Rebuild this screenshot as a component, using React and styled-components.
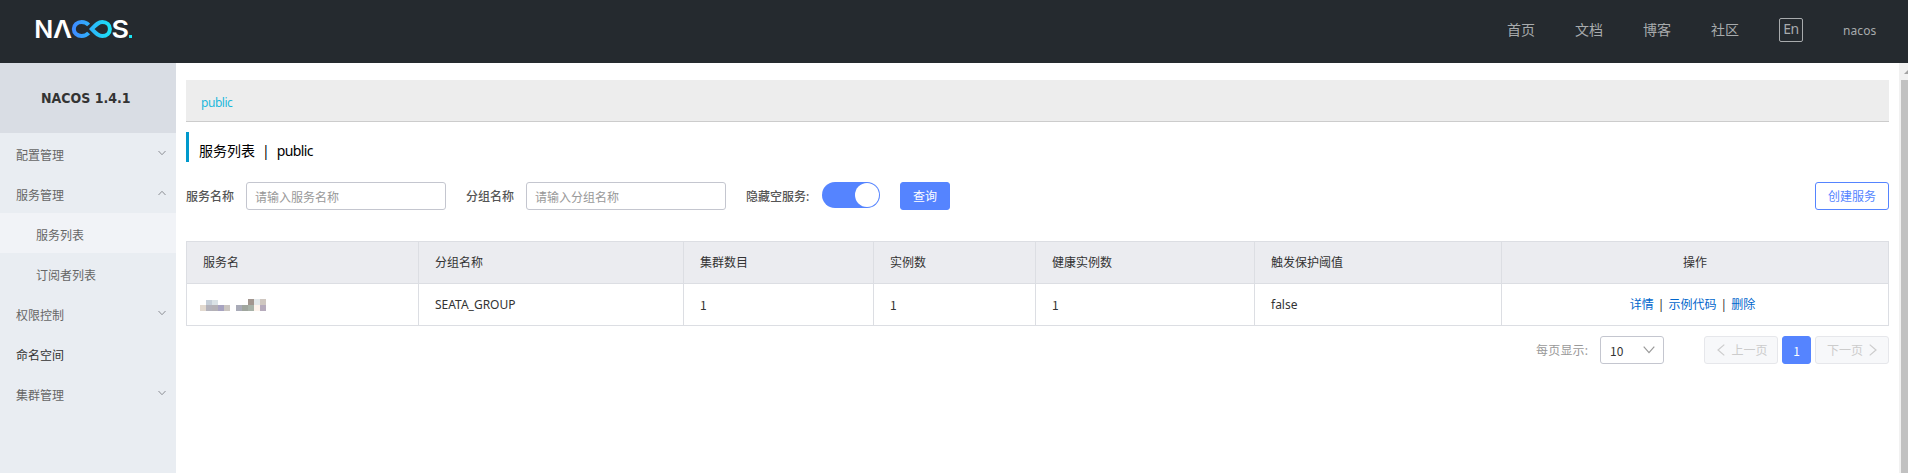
import React from "react";
import styled, { createGlobalStyle } from "styled-components";

const GlobalStyle = createGlobalStyle`
  * { box-sizing: border-box; }
  body {
    margin: 0;
    overflow: hidden;
    background: #fff;
    color: #333;
    font: 12px/18px "Noto Sans", "Noto Sans CJK SC", sans-serif;
  }
`;

const Page = styled.div`
  display: flex;
  flex-direction: column;
  height: 473px;
`;

const Header = styled.header`
  flex: none;
  display: flex;
  align-items: center;
  justify-content: space-between;
  height: 63px;
  padding: 0 32px 0 36px;
  background: #252a2f;
`;

const Logo = styled.svg`
  display: block;
  width: 98px;
  height: 20px;
  margin-bottom: 5px;
  overflow: visible;
`;

const Nav = styled.nav`
  display: flex;
  align-items: center;
  gap: 40px;
  height: 24px;
  margin-bottom: 3px;
  color: #a8abad;
  font-size: 14px;
  line-height: 24px;
`;

const NavLink = styled.a`
  width: 28px;
  white-space: nowrap;
`;

const LangSwitch = styled.button`
  display: flex;
  justify-content: center;
  width: 24px;
  height: 24px;
  padding: 0;
  border: 1px solid #a8abad;
  border-radius: 2px;
  background: none;
  color: inherit;
  font: 14px/20px "Noto Sans", sans-serif;
  letter-spacing: -0.4px;
`;

const UserName = styled.span`
  width: 33px;
  font-size: 12px;
  letter-spacing: 0.1px;
  padding-top: 2px;
`;

const Body = styled.div`
  flex: 1;
  display: flex;
  min-height: 0;
`;

const Sidebar = styled.aside`
  flex: none;
  width: 176px;
  background: #e9edf2;
`;

const Product = styled.div`
  height: 70px;
  padding-left: 41px;
  background: #d9dde4;
  color: #333;
  font: bold 14px/71px "DejaVu Sans Condensed", "DejaVu Sans", sans-serif;
  white-space: nowrap;
`;

const MenuItem = styled.div`
  display: flex;
  align-items: center;
  justify-content: space-between;
  height: 40px;
  padding: 5px 10px 0 ${(p) => (p.$nested ? 36 : 16)}px;
  background: ${(p) => (p.$active ? "#f1f3f7" : "transparent")};
  color: ${(p) => (p.$strong ? "#333" : "#666")};
`;

const MenuArrow = styled.svg`
  width: 8px;
  height: 6px;
  margin-bottom: 5px;
  transform: ${(p) => (p.$up ? "rotate(180deg)" : "none")};
`;

const Main = styled.main`
  flex: 1;
  min-width: 0;
  padding: 17px 10px 0;
`;

const NamespaceBar = styled.div`
  height: 42px;
  padding: 3px 15px 0;
  border-bottom: 1px solid #ccc;
  background: #ededed;
  color: #1cb8dc;
  font-size: 12px;
  line-height: 40px;
  letter-spacing: -0.45px;
`;

const Title = styled.h1`
  display: flex;
  gap: 7px;
  height: 30px;
  margin: 10px 0 20px;
  padding: 4px 0 0 10px;
  border-left: 3px solid #09c;
  color: #000;
  font-size: 14px;
  font-weight: 400;
  line-height: 30px;
`;

const TitlePart = styled.span`
  display: block;
  letter-spacing: ${(p) => (p.$tight ? "-0.6px" : "normal")};
`;

const Form = styled.form`
  display: flex;
  align-items: flex-start;
  height: 28px;
  margin-bottom: 31px;
`;

const Label = styled.label`
  width: ${(p) => p.$width}px;
  color: #555;
  line-height: 30px;
  font-weight: 500;
  white-space: nowrap;
`;

const Input = styled.input`
  width: 200px;
  height: 28px;
  margin-right: 20px;
  padding: 2px 8px 0;
  border: 1px solid #c4c6cf;
  border-radius: 3px;
  outline: none;
  font: inherit;
  &::placeholder { color: #999; opacity: 1; }
`;

const Toggle = styled.button`
  display: flex;
  justify-content: flex-end;
  width: 58px;
  height: 26px;
  margin-right: 20px;
  padding: 1px;
  border: 0;
  border-radius: 13px;
  background: #5584ff;
`;

const Knob = styled.span`
  width: 24px;
  height: 24px;
  border-radius: 50%;
  background: #fff;
`;

const Button = styled.button`
  width: ${(p) => p.$width}px;
  height: 28px;
  margin-left: ${(p) => (p.$end ? "auto" : 0)};
  padding: 2px 0 0;
  border: 1px solid #5584ff;
  border-radius: 3px;
  background: ${(p) => (p.$outline ? "#fff" : "#5584ff")};
  color: ${(p) => (p.$outline ? "#5584ff" : "#fff")};
  font: inherit;
`;

const Table = styled.table`
  width: 1703px;
  table-layout: fixed;
  border-collapse: separate;
  border-spacing: 0;
  border-top: 1px solid #dcdee3;
  border-left: 1px solid #dcdee3;
`;

const Col = styled.col`
  width: ${(p) => p.$width}px;
`;

const cellStyles = (p) => `
  height: 42px;
  padding: ${p.$raised ? 0 : 1}px 16px 0;
  border-right: 1px solid #dcdee3;
  border-bottom: 1px solid #dcdee3;
  text-align: ${p.$center ? "center" : "left"};
  font-weight: 400;
  white-space: nowrap;
`;

const HeadCell = styled.th`
  ${cellStyles}
  background: #ebecf0;
`;

const Cell = styled.td`
  ${cellStyles}
`;

const Count = styled.span`
  font-family: "Noto Sans CJK SC", sans-serif;
`;

const Actions = styled.div`
  padding-right: 5px;
`;

const Action = styled.a`
  color: #06c;
`;

const Divider = styled.span`
  margin: 0 4px;
`;

const Mosaic = styled.svg`
  display: block;
  width: 60px;
  height: 12px;
  margin-left: -3px;
`;

const Footer = styled.div`
  display: flex;
  justify-content: flex-end;
  height: 28px;
  margin-top: 10px;
  line-height: 29px;
`;

const SizeLabel = styled.span`
  width: 64px;
  color: #999;
  letter-spacing: 0.2px;
  white-space: nowrap;
`;

const Select = styled.div`
  display: flex;
  align-items: center;
  justify-content: space-between;
  width: 64px;
  height: 28px;
  margin-right: 40px;
  padding: 0 8px 0 9px;
  border: 1px solid #c4c6cf;
  border-radius: 3px;
`;

const Arrow = styled.svg`
  flex: none;
  display: block;
  width: ${(p) => p.$width}px;
  height: ${(p) => p.$height}px;
`;

const PageButton = styled.button`
  display: flex;
  align-items: center;
  justify-content: center;
  gap: 6px;
  width: ${(p) => (p.$current ? 29 : 74)}px;
  height: 28px;
  margin-left: ${(p) => (p.$first ? 0 : 4)}px;
  padding: 0 0 0 ${(p) => (p.$first ? 3 : 0)}px;
  border: 1px solid ${(p) => (p.$current ? "#5584ff" : "#e6e7eb")};
  border-radius: 3px;
  background: ${(p) => (p.$current ? "#5584ff" : "#f7f8fa")};
  color: ${(p) => (p.$current ? "#fff" : "#ccc")};
  font: inherit;
`;

const ButtonText = styled.span`
  padding-top: 1px;
`;

const Scrollbar = styled.div`
  flex: none;
  width: 9px;
  padding-left: 2px;
  background: #f1f1f1;
`;

const ScrollUp = styled.svg`
  display: block;
  width: 7px;
  height: 17px;
`;

const ScrollThumb = styled.div`
  height: 393px;
  background: #c1c1c1;
`;

const menu = [
  { label: "配置管理", arrow: "down" },
  { label: "服务管理", arrow: "up" },
  { label: "服务列表", nested: true, active: true },
  { label: "订阅者列表", nested: true },
  { label: "权限控制", arrow: "down" },
  { label: "命名空间", strong: true },
  { label: "集群管理", arrow: "down" },
];

const columns = [
  { label: "服务名", width: 232 },
  { label: "分组名称", width: 265 },
  { label: "集群数目", width: 190 },
  { label: "实例数", width: 162 },
  { label: "健康实例数", width: 219 },
  { label: "触发保护阈值", width: 247 },
  { label: "操作", width: 387, center: true },
];

const mosaic = [
  [6, 1, "#c5ced8"], [12, 1, "#dae2e6"],
  [0, 6, "#e2d9cf"], [6, 6, "#b3b2bb"], [12, 6, "#b4b1b6"], [18, 6, "#a7a3c0"], [24, 6, "#cac5c0"],
  [48, 0, "#a2968f"], [54, 0, "#e3e8ea"], [60, 0, "#cfc7c0"],
  [36, 6, "#a9abb8"], [42, 6, "#a0a69e"], [48, 6, "#a8b2a8"], [54, 6, "#fdf3ec"], [60, 6, "#b6abbc"],
];

const NacosLogo = () => (
  <Logo viewBox="0 0 98 20" aria-label="NACOS">
    <defs>
      <linearGradient id="loop" gradientUnits="userSpaceOnUse" x1="36" y1="0" x2="76" y2="0">
        <stop offset="0" stopColor="#4088ff" />
        <stop offset="1" stopColor="#19e5f5" />
      </linearGradient>
    </defs>
    <g fill="#fff" fontFamily="Inter, sans-serif" fontWeight="600" fontSize="24.7">
      <text x="-1.7" y="19" textLength="19" lengthAdjust="spacingAndGlyphs">N</text>
      <text x="17" y="19" textLength="19" lengthAdjust="spacingAndGlyphs">Λ</text>
      <text x="75.5" y="19" textLength="17.5" lengthAdjust="spacingAndGlyphs">S</text>
    </g>
    <g fill="none" stroke="url(#loop)" strokeWidth="4">
      <path d="M52.6 6 C50.8 4 48.4 3 45.6 3 C41.2 3 37.8 6 37.8 10 C37.8 14 41.2 17 45.6 17 C48.4 17 50.8 16 52.6 14" />
      <path d="M55.8 10 C60 5.6 62.2 3 66.3 3 C70.7 3 73.9 6 73.9 10 C73.9 14 70.7 17 66.3 17 C62.2 17 60 14.4 55.8 10 Z" />
    </g>
    <rect x="93" y="16" width="3" height="3" fill="#19e5f5" />
  </Logo>
);

export default function App() {
  return (
    <Page>
      <GlobalStyle />
      <Header>
        <NacosLogo />
        <Nav>
          {["首页", "文档", "博客", "社区"].map((t) => <NavLink key={t}>{t}</NavLink>)}
          <LangSwitch>En</LangSwitch>
          <UserName>nacos</UserName>
        </Nav>
      </Header>
      <Body>
        <Sidebar>
          <Product>NACOS 1.4.1</Product>
          {menu.map((m) => (
            <MenuItem key={m.label} $nested={m.nested} $active={m.active} $strong={m.strong}>
              {m.label}
              {m.arrow && (
                <MenuArrow $up={m.arrow === "up"} viewBox="0 0 8 6">
                  <path d="M0.5 1 L4 4.7 L7.5 1" fill="none" stroke="#8b8e94" />
                </MenuArrow>
              )}
            </MenuItem>
          ))}
        </Sidebar>
        <Main>
          <NamespaceBar>public</NamespaceBar>
          <Title>
            <TitlePart>服务列表</TitlePart>
            <TitlePart>|</TitlePart>
            <TitlePart $tight>public</TitlePart>
          </Title>
          <Form>
            <Label $width={60}>服务名称</Label>
            <Input placeholder="请输入服务名称" />
            <Label $width={60}>分组名称</Label>
            <Input placeholder="请输入分组名称" />
            <Label $width={76}>隐藏空服务:</Label>
            <Toggle type="button"><Knob /></Toggle>
            <Button type="button" $width={50}>查询</Button>
            <Button type="button" $width={74} $outline $end>创建服务</Button>
          </Form>
          <Table>
            <colgroup>{columns.map((c) => <Col key={c.label} $width={c.width} />)}</colgroup>
            <thead>
              <tr>{columns.map((c) => <HeadCell key={c.label} $center={c.center}>{c.label}</HeadCell>)}</tr>
            </thead>
            <tbody>
              <tr>
                <Cell $raised>
                  <Mosaic viewBox="0 0 60 12" overflow="visible" shapeRendering="crispEdges">
                    {mosaic.map(([x, y, fill]) => (
                      <rect key={`${x}-${y}`} x={x} y={y} width="6" height={y === 1 ? 5 : 6} fill={fill} />
                    ))}
                  </Mosaic>
                </Cell>
                <Cell>SEATA_GROUP</Cell>
                <Cell><Count>1</Count></Cell>
                <Cell><Count>1</Count></Cell>
                <Cell><Count>1</Count></Cell>
                <Cell>false</Cell>
                <Cell $center>
                  <Actions>
                    <Action>详情</Action><Divider>|</Divider>
                    <Action>示例代码</Action><Divider>|</Divider>
                    <Action>删除</Action>
                  </Actions>
                </Cell>
              </tr>
            </tbody>
          </Table>
          <Footer>
            <SizeLabel>每页显示:</SizeLabel>
            <Select>
              <Count>10</Count>
              <Arrow viewBox="0 0 12 8" $width={12} $height={8}>
                <path d="M0.7 0.7 L6 6.7 L11.3 0.7" fill="none" stroke="#999" strokeWidth="1.2" />
              </Arrow>
            </Select>
            <PageButton type="button" $first>
              <Arrow viewBox="0 0 8 12" $width={8} $height={12}>
                <path d="M7.3 0.6 L1 6 L7.3 11.4" fill="none" stroke="#ccc" strokeWidth="1.2" />
              </Arrow>
              <ButtonText>上一页</ButtonText>
            </PageButton>
            <PageButton type="button" $current><Count>1</Count></PageButton>
            <PageButton type="button">
              <ButtonText>下一页</ButtonText>
              <Arrow viewBox="0 0 8 12" $width={8} $height={12}>
                <path d="M0.7 0.6 L7 6 L0.7 11.4" fill="none" stroke="#ccc" strokeWidth="1.2" />
              </Arrow>
            </PageButton>
          </Footer>
        </Main>
        <Scrollbar>
          <ScrollUp viewBox="0 0 7 17"><path d="M3 11 L7 7 V11 Z" fill="#a3a3a3" /></ScrollUp>
          <ScrollThumb />
        </Scrollbar>
      </Body>
    </Page>
  );
}
